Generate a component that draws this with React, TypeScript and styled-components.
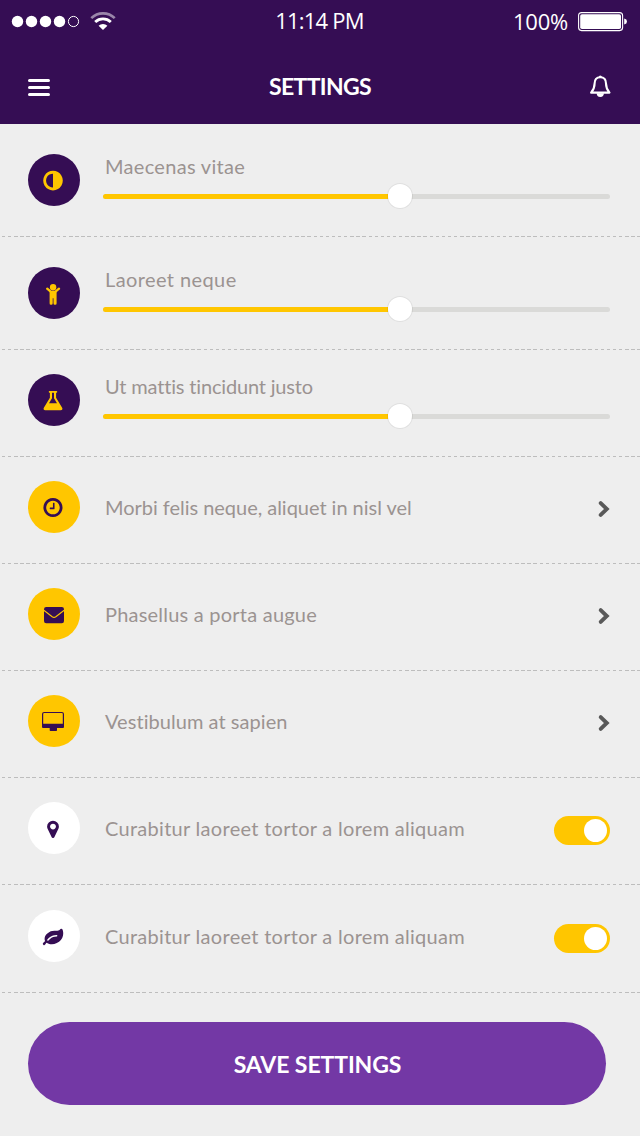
import React from 'react';
import styled, { createGlobalStyle } from 'styled-components';

const color = {
  plum: '#350d54',
  violet: '#7338a5',
  amber: '#ffc600',
  page: '#eeeeee',
  label: '#9b9391',
  track: '#dadad8',
};

const GlobalStyle = createGlobalStyle`
  body { margin: 0; background: ${color.page}; }
  * { box-sizing: border-box; }
`;

const Screen = styled.div`
  width: 640px;
  height: 1136px;
  background: ${color.page};
  font-family: Lato, 'Liberation Sans', sans-serif;
  font-variant-ligatures: none;
  overflow: hidden;
`;

const Header = styled.header`
  height: 124px;
  background: ${color.plum};
  color: #fff;
`;

const StatusBar = styled.div`
  display: grid;
  grid-template-columns: 1fr auto 1fr;
  height: 50px;
  padding: 6px 12px 0 11px;
  font: 400 22px/30px 'Open Sans', 'Noto Sans', sans-serif;
`;

const Signal = styled.svg`
  display: block;
`;

const Clock = styled.span`
  margin-top: -1px;
  letter-spacing: -0.8px;
`;

const Power = styled.div`
  display: flex;
  justify-content: flex-end;
  gap: 10px;
  letter-spacing: -0.2px;
`;

const BatteryIcon = styled.svg`
  display: block;
  margin-top: 5px;
`;

const NavBar = styled.nav`
  display: flex;
  justify-content: space-between;
  align-items: flex-start;
  padding: 23px 28px 0;
`;

const Title = styled.h1`
  margin: -1px 0 0;
  padding-left: 2px;
  font-size: 23px;
  font-weight: 700;
  line-height: 28px;
  letter-spacing: -0.65px;
`;

const NavIcon = styled.svg`
  display: block;
`;

const Row = styled.section<{ $height: number; $top: number }>`
  display: grid;
  grid-template-columns: 52px 1fr auto;
  column-gap: 23px;
  align-items: start;
  height: ${(p) => p.$height}px;
  padding: ${(p) => p.$top}px 30px 0 28px;
  background: repeating-linear-gradient(90deg, #bdbdbd 0 1.2px, transparent 1.2px 3.9px, #bdbdbd 3.9px 6.11px) -2px
    bottom / 101% 1px no-repeat;
`;

const Badge = styled.div<{ $bg: string; $fg: string }>`
  width: 52px;
  height: 52px;
  border-radius: 50%;
  background: ${(p) => p.$bg};
  color: ${(p) => p.$fg};
`;

const Glyph = styled.svg`
  display: block;
`;

const Label = styled.div<{ $tracking: number; $top?: number }>`
  padding-left: 2px;
  margin-top: ${(p) => p.$top ?? 0}px;
  color: ${color.label};
  font-size: 20px;
  line-height: 24px;
  letter-spacing: ${(p) => p.$tracking}px;
  white-space: nowrap;
`;

const SliderBody = styled.div`
  grid-column: 2 / 4;
`;

const Track = styled.div`
  display: flex;
  height: 5px;
  margin-top: 16px;
  border-radius: 2.5px;
  background: ${color.track};
`;

const Fill = styled.div`
  width: 285px;
  height: 5px;
  border-radius: 2.5px 0 0 2.5px;
  background: ${color.amber};
`;

const Thumb = styled.div`
  width: 24px;
  height: 24px;
  margin-top: -10px;
  border-radius: 50%;
  background: #fff;
  box-shadow: 0 0 0 1px rgba(0, 0, 0, 0.06);
`;

const Chevron = styled.svg`
  display: block;
  margin-top: 19px;
`;

const Switch = styled.div`
  display: flex;
  justify-content: flex-end;
  align-items: center;
  width: 56px;
  height: 29px;
  margin-top: 14px;
  padding-right: 3px;
  border-radius: 14.5px;
  background: ${color.amber};
`;

const Knob = styled.div`
  width: 23px;
  height: 23px;
  border-radius: 50%;
  background: #fff;
`;

const SaveButton = styled.button`
  display: block;
  width: 578px;
  height: 83px;
  margin: 29px 0 0 28px;
  padding: 0 0 0 1px;
  border: 0;
  border-radius: 42px;
  background: ${color.violet};
  color: #fff;
  font: 700 23px/28px Lato, sans-serif;
  letter-spacing: -0.1px;
`;

type IconName = 'contrast' | 'child' | 'flask' | 'clock' | 'mail' | 'desktop' | 'pin' | 'leaf';

const icons: Record<IconName, React.ReactNode> = {
  contrast: (
    <path
      transform="translate(15.2 16.8) scale(.01276)"
      d="M768 1312V224q-148 0-273 73T297 495t-73 273 73 273 198 198 273 73zm768-544q0 209-103 385.5T1153.5 1433 768 1536t-385.5-103T103 1153.5 0 768t103-385.5T382.5 103 768 0t385.5 103T1433 382.5 1536 768z"
    />
  ),
  child: (
    <>
      <circle cx="25.1" cy="20.2" r="3.2" />
      <path d="M19.2 21.7 23 24.9H27.2L31 21.7" fill="none" stroke="currentColor" strokeWidth="2.4" strokeLinecap="round" strokeLinejoin="round" />
      <path d="M21.6 24.6h7v11.6a1.4 1.4 0 0 1-1.4 1.5 1.5 1.5 0 0 1-1.7-1.5v-5h-.8v5a1.5 1.5 0 0 1-1.7 1.5 1.4 1.4 0 0 1-1.4-1.5z" />
    </>
  ),
  flask: (
    <path
      fillRule="evenodd"
      d="M21.6 17h6.8a.8.8 0 0 1 0 1.7h-.3v5.1l5.900 9.700c1 1.600.2 2.700-1.300 2.700H17.300c-1.500 0-2.300-1.100-1.300-2.700l5.900-9.700v-5.100h-.3a.8.8 0 0 1 0-1.700zM24 18.700v5.600L21 29.300h8L26 24.300v-5.600z"
    />
  ),
  clock: (
    <path
      transform="translate(15.4 17) scale(.01244)"
      d="M896 416v448q0 14-9 23t-23 9H544q-14 0-23-9t-9-23v-64q0-14 9-23t23-9h224V416q0-14 9-23t23-9h64q14 0 23 9t9 23zm416 352q0-148-73-273t-198-198-273-73-273 73-198 198-73 273 73 273 198 198 273 73 273-73 198-198 73-273zm224 0q0 209-103 385.5T1153.5 1433 768 1536t-385.5-103T103 1153.5 0 768t103-385.5T382.5 103 768 0t385.5 103T1433 382.5 1536 768z"
    />
  ),
  mail: (
    <>
      <rect x="16" y="19" width="20" height="16.3" rx="2.2" />
      <path d="M15.8 22.3 24.2 28.7Q26 30 27.8 28.7L36.2 22.3" fill="none" stroke={color.amber} strokeWidth="1.1" />
    </>
  ),
  desktop: (
    <>
      <rect x="14.6" y="17.5" width="20.8" height="15" rx="1.6" fill="none" stroke="currentColor" strokeWidth="1.2" />
      <path d="M14 28.8h22v2.600a1.700 1.700 0 0 1-1.700 1.700H29v2.100q0 .8-.8.8h-5.700q-.8 0-.8-.8v-2.100h-6a1.700 1.700 0 0 1-1.700-1.700z" />
    </>
  ),
  pin: (
    <path
      transform="translate(19.1 18.8) scale(.01152 .01125)"
      d="M768 512q0-106-75-181t-181-75-181 75-75 181 75 181 181 75 181-75 75-181zm256 0q0 109-33 179l-364 774q-16 33-47.5 52t-67.5 19-67.5-19-46.5-52L33 691Q0 621 0 512q0-212 150-362T512 0t362 150 150 362z"
    />
  ),
  leaf: (
    <path
      transform="translate(14.8 17.7) scale(.01138)"
      d="M1280 704q0-26-19-45t-45-19q-172 0-318 49.5T638.5 824 402 1043q-19 21-19 45 0 26 19 45t45 19q24 0 45-19 27-24 74-71t67-66q137-124 268.5-176t313.5-52q26 0 45-19t19-45zm512-198q0 95-20 193-46 224-184.5 383T1230 1350q-214 108-438 108-148 0-286-47-15-5-88-42t-96-37q-16 0-39.5 32t-45 70-52.5 70-60 32q-43 0-63.5-17.5T16 1459q-2-4-6-11t-5.5-10T1 1426t-1-16q0-35 31-73.5t68-65.5 68-56 31-48q0-4-14-38t-16-44q-9-51-9-104 0-115 43.5-220t119-184.5 170.5-139T697 313q55-18 145-25.5t179.5-9 178.5-6 163.5-24T1477 192l29.5-29.5 29.5-28 27-20 36.5-16T1643 96q39 0 70.5 46t47.5 112 24 124 8 96 0 32z"
    />
  ),
};

const tones = {
  dark: { $bg: color.plum, $fg: color.amber },
  amber: { $bg: color.amber, $fg: color.plum },
  white: { $bg: '#ffffff', $fg: color.plum },
};

function IconBadge({ icon, tone }: { icon: IconName; tone: keyof typeof tones }) {
  return (
    <Badge {...tones[tone]}>
      <Glyph width="52" height="52" viewBox="0 0 52 52" fill="currentColor">
        {icons[icon]}
      </Glyph>
    </Badge>
  );
}

const sliders: { icon: IconName; text: string; tracking: number; height: number; top: number }[] = [
  { icon: 'contrast', text: 'Maecenas vitae', tracking: 0.3, height: 113, top: 30 },
  { icon: 'child', text: 'Laoreet neque', tracking: 0.4, height: 113, top: 30 },
  { icon: 'flask', text: 'Ut mattis tincidunt justo', tracking: -0.17, height: 107, top: 24 },
];

const links: { icon: IconName; text: string; tracking: number }[] = [
  { icon: 'clock', text: 'Morbi felis neque, aliquet in nisl vel', tracking: -0.03 },
  { icon: 'mail', text: 'Phasellus a porta augue', tracking: 0.22 },
  { icon: 'desktop', text: 'Vestibulum at sapien', tracking: 0.05 },
];

const toggles: { icon: IconName; text: string; height: number; top: number }[] = [
  { icon: 'pin', text: 'Curabitur laoreet tortor a lorem aliquam', height: 107, top: 24 },
  { icon: 'leaf', text: 'Curabitur laoreet tortor a lorem aliquam', height: 108, top: 25 },
];

export default function App() {
  return (
    <Screen>
      <GlobalStyle />
      <Header>
        <StatusBar>
          <Signal width="110" height="30" viewBox="11 6 110 30" fill="#fff">
            {[17.5, 31.5, 45.5, 59.5].map((x) => (
              <circle key={x} cx={x} cy="21.5" r="5.7" />
            ))}
            <circle cx="73.5" cy="21.5" r="5.1" fill="none" stroke="#fff" strokeWidth="1" />
            <g fill="none" stroke="#fff">
              <path d="M91.3 18.1Q96.2 13.3 103 13.3T114.7 18.1" strokeWidth="2.7" opacity=".5" />
              <path d="M95.2 22Q98.5 18.9 103 18.9T110.8 22" strokeWidth="2.9" />
            </g>
            <path d="M98.6 25.7Q100.5 24 103 24T107.4 25.7L103 30.1z" />
          </Signal>
          <Clock>11:14 PM</Clock>
          <Power>
            <span>100%</span>
            <BatteryIcon width="50" height="21" viewBox="0 0 50 21" fill="#fff">
              <rect x=".6" y="1.6" width="44" height="18" rx="3" fill="none" stroke="#fff" strokeWidth="1.1" />
              <rect x="2.2" y="3.2" width="40.8" height="14.8" rx="1.8" />
              <path d="M46.2 7.5q2.8.6 2.8 3t-2.8 3z" />
            </BatteryIcon>
          </Power>
        </StatusBar>
        <NavBar>
          <NavIcon width="22" height="30" viewBox="0 0 22 30">
            <path d="M1.5 7.5h19M1.5 14.5h19M1.5 21.5h19" stroke="#fff" strokeWidth="3" strokeLinecap="round" />
          </NavIcon>
          <Title>SETTINGS</Title>
          <NavIcon width="24" height="30" viewBox="0 0 24 30" fill="none">
            <path
              d="M12.300 4.200c-3.900 0-5.700 2.700-5.700 6.200 0 4.900-1.500 6.800-3.500 9.200h18.400c-2-2.400-3.500-4.300-3.500-9.200 0-3.500-1.800-6.200-5.700-6.200z"
              stroke="#fff"
              strokeWidth="2.1"
              strokeLinejoin="round"
            />
            <path d="M10.700 4a1.600 1.600 0 0 1 3.200 0zM8.700 20.300h7.200a3.600 3.600 0 0 1-7.200 0z" fill="#fff" />
          </NavIcon>
        </NavBar>
      </Header>

      {sliders.map((s) => (
        <Row key={s.icon} $height={s.height} $top={s.top}>
          <IconBadge icon={s.icon} tone="dark" />
          <SliderBody>
            <Label $tracking={s.tracking}>{s.text}</Label>
            <Track>
              <Fill />
              <Thumb />
            </Track>
          </SliderBody>
        </Row>
      ))}

      {links.map((l) => (
        <Row key={l.icon} $height={107} $top={24}>
          <IconBadge icon={l.icon} tone="amber" />
          <Label $tracking={l.tracking} $top={14}>
            {l.text}
          </Label>
          <Chevron width="13" height="18" viewBox="0 0 13 18">
            <path d="M3.700 3.100 9.800 9 3.700 14.900" fill="none" stroke="#595959" strokeWidth="3.900" strokeLinecap="round" />
          </Chevron>
        </Row>
      ))}

      {toggles.map((t) => (
        <Row key={t.icon} $height={t.height} $top={t.top}>
          <IconBadge icon={t.icon} tone="white" />
          <Label $tracking={0.29} $top={14}>
            {t.text}
          </Label>
          <Switch>
            <Knob />
          </Switch>
        </Row>
      ))}

      <SaveButton>SAVE SETTINGS</SaveButton>
    </Screen>
  );
}
